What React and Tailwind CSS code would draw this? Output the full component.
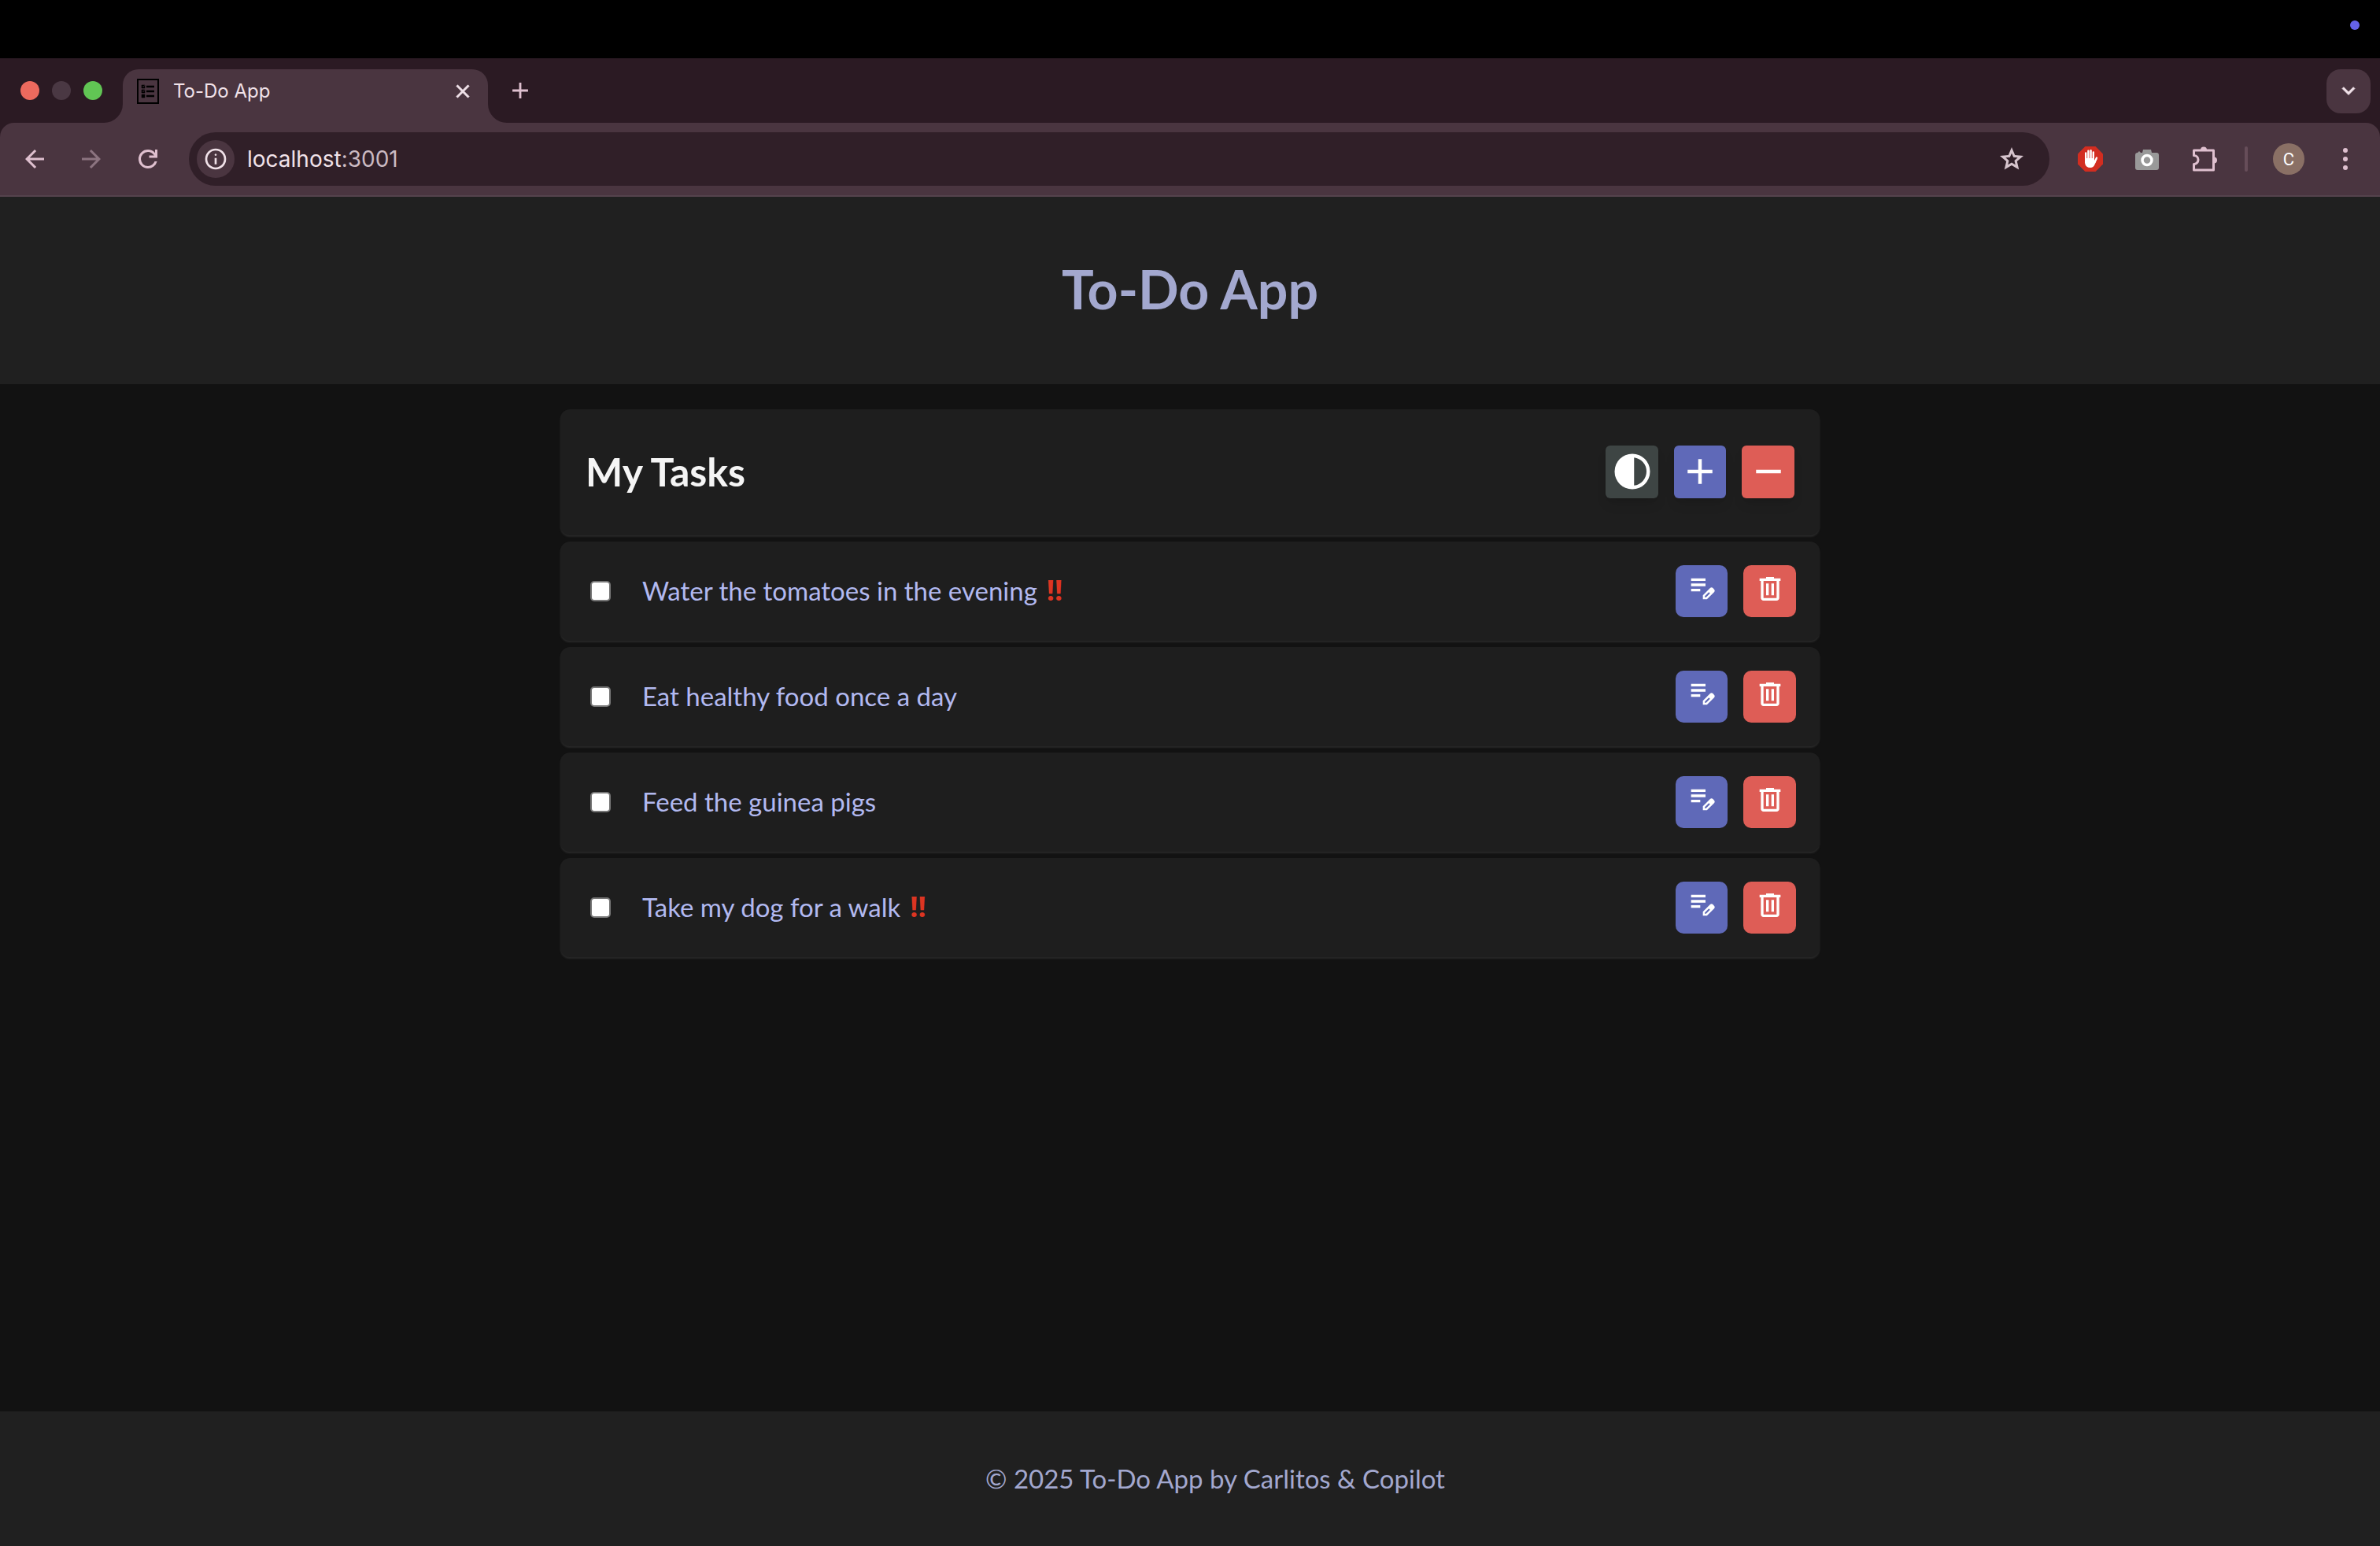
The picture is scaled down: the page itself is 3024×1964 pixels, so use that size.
const icons = {
  add: "M440-440H200v-80h240v-240h80v240h240v80H520v240h-80v-240Z",
  remove: "M200-440v-80h560v80H200Z",
  contrast:
    "M480-80q-83 0-156-31.500T197-197q-54-54-85.500-127T80-480q0-83 31.500-156T197-763q54-54 127-85.500T480-880q83 0 156 31.500T763-763q54 54 85.500 127T880-480q0 83-31.500 156T763-197q-54 54-127 85.500T480-80Zm40-83q119-15 199.500-104.500T800-480q0-123-80.500-212.500T520-797v634Z",
  edit: "M160-400v-80h280v80H160Zm0-160v-80h440v80H160Zm0-160v-80h440v80H160Zm360 560v-123l221-220q9-9 20-13t22-4q12 0 23 4.500t20 13.500l37 37q8 9 12.500 20t4.500 22q0 11-4 22.500T863-380L643-160H520Zm300-263-37-37 37 37ZM580-220h38l121-122-18-19-19-18-122 121v38Zm141-141-19-18 37 37-18-19Z",
  trash:
    "M280-120q-33 0-56.500-23.500T200-200v-520h-40v-80h200v-40h240v40h200v80h-40v520q0 33-23.500 56.500T680-120H280Zm400-600H280v520h400v-520ZM360-280h80v-360h-80v360Zm160 0h80v-360h-80v360Z",
  back: "m313-440 224 224-57 56-320-320 320-320 57 56-224 224h487v80H313Z",
  forward: "M647-440H160v-80h487L423-744l57-56 320 320-320 320-57-56 224-224Z",
  reload:
    "M480-160q-134 0-227-93t-93-227q0-134 93-227t227-93q69 0 132 28.500T720-690v-110h80v280H520v-80h168q-32-56-87.500-88T480-720q-100 0-170 70t-70 170q0 100 70 170t170 70q77 0 139-44t87-116h84q-28 106-114 173t-196 67Z",
  star: "m354-287 126-76 126 77-33-144 111-96-146-13-58-136-58 135-146 13 111 97-33 143ZM233-120l65-281L80-590l288-25 112-265 112 265 288 25-218 189 65 281-247-149-247 149Z",
  info: "M440-280h80v-240h-80v240Zm40-320q17 0 28.500-11.500T520-640q0-17-11.500-28.500T480-680q-17 0-28.500 11.500T440-640q0 17 11.500 28.500T480-600Zm0 520q-83 0-156-31.500T197-197q-54-54-85.500-127T80-480q0-83 31.500-156T197-763q54-54 127-85.500T480-880q83 0 156 31.500T763-763q54 54 85.500 127T880-480q0 83-31.500 156T763-197q-54 54-127 85.500T480-80Zm0-80q134 0 227-93t93-227q0-134-93-227t-227-93q-134 0-227 93t-93 227q0 134 93 227t227 93Z",
  chevron: "M480-344 240-584l56-56 184 184 184-184 56 56-240 240Z",
  close: "m256-200-56-56 224-224-224-224 56-56 224 224 224-224 56 56-224 224 224 224-56 56-224-224-224 224Z",
};

function Icon({ name, className }) {
  return (
    <svg viewBox="0 -960 960 960" fill="currentColor" aria-hidden="true" className={className}>
      <path d={icons[name]} />
    </svg>
  );
}

function TabFlare({ className }) {
  return (
    <svg viewBox="0 0 24 24" aria-hidden="true" className={className}>
      <path d="M24 0V24H0A24 24 0 0 0 24 0Z" fill="#4a3540" />
    </svg>
  );
}

function Favicon() {
  return (
    <svg viewBox="0 0 28 32" aria-hidden="true" className="h-8 w-7" fill="none" stroke="#000">
      <rect x="1" y="1" width="26" height="30" strokeWidth="2" />
      <path d="M12 10h10M12 16h10M12 22h10" strokeWidth="2.500" />
      <path d="M6 8h4v4H6zM6 14h4v4H6zM6 20h4v4H6z" fill="#000" strokeWidth="0.500" />
      <path d="M7 9.500l1 1 1.500-2M7 15.500l1 1 1.500-2" stroke="#4a3540" strokeWidth="0.800" />
    </svg>
  );
}

function TabStrip() {
  return (
    <div className="flex h-[82px] items-end bg-[#2b1a23]">
      <div className="flex gap-4 self-center pl-[26px]">
        <button aria-label="Close window" className="size-6 rounded-full bg-[#ed6a5e]" />
        <button aria-label="Minimize window" className="size-6 rounded-full bg-[#4a3843]" />
        <button aria-label="Zoom window" className="size-6 rounded-full bg-[#61c554]" />
      </div>
      <TabFlare className="ml-0.5 size-6" />
      <div className="flex h-[68px] w-[464px] items-center rounded-t-[20px] bg-[#4a3540] pb-3 pl-[18px] pr-[18px]">
        <Favicon />
        <span className="ml-[18px] flex-1 text-2xl text-[#f1e2e9]">To-Do App</span>
        <button aria-label="Close tab" className="text-[#f1e2e9]">
          <Icon name="close" className="size-7 stroke-current stroke-[24px]" />
        </button>
      </div>
      <TabFlare className="size-6 -scale-x-100" />
      <button aria-label="New tab" className="mb-6 text-[#dfc0cf]">
        <Icon name="add" className="size-[34px]" />
      </button>
      <button
        aria-label="Search tabs"
        className="mb-3 ml-auto mr-3 grid size-14 place-items-center rounded-[18px] bg-[#4a3540] text-[#f1e2e9]"
      >
        <Icon name="chevron" className="size-8 stroke-current stroke-[24px]" />
      </button>
    </div>
  );
}

function Toolbar() {
  return (
    <div className="bg-[#2b1a23]">
      <div className="flex h-[94px] items-center rounded-t-[18px] border-b-2 border-[#55434d] bg-[#4a3540] text-[#dfc0cf]">
        <div className="flex gap-9 pl-[26px]">
          <button aria-label="Back">
            <Icon name="back" className="size-9" />
          </button>
          <button aria-label="Forward" className="text-[#8c7480]">
            <Icon name="forward" className="size-9" />
          </button>
          <button aria-label="Reload">
            <Icon name="reload" className="size-9" />
          </button>
        </div>
        <div className="ml-[34px] flex h-[68px] flex-1 items-center rounded-full bg-[#301f28] pl-2.5 pr-[30px]">
          <button
            aria-label="Site information"
            className="grid size-12 place-items-center rounded-full bg-[#4a3540] text-[#f1e2e9]"
          >
            <Icon name="info" className="size-8" />
          </button>
          <a href="#address" className="ml-4 flex-1 text-[28px] text-[#f1e2e9]">
            localhost<span className="text-[#cbbac2]">:3001</span>
          </a>
          <button aria-label="Bookmark this tab" className="text-[#d6c4cd]">
            <Icon name="star" className="size-9" />
          </button>
        </div>
        <div className="flex items-center pl-9">
          <button aria-label="Ad blocker">
            <svg viewBox="0 0 32 32" className="size-8" aria-hidden="true">
              <path d="M9.400 0h13.200L32 9.400v13.200L22.600 32H9.400L0 22.600V9.400z" fill="#d22d20" />
              <g stroke="#fff" strokeWidth="2.400" strokeLinecap="round" fill="none">
                <path d="M10.200 8.500v10M13.400 5.800v12M16.600 5.200v12M19.800 7.500v10M24 14.500L21 21" />
              </g>
              <path d="M9 15h12v3.500l2-3 1.500.500-3 7q-1.500 4-5.500 4-6 0-7-6z" fill="#fff" />
            </svg>
          </button>
          <button aria-label="Screenshot" className="ml-10">
            <svg viewBox="0 0 32 32" className="size-8" aria-hidden="true">
              <path d="M4 8l2-2 2 2h2l1-4h10l1 4h6q3 0 3 3v16q0 3-3 3H4q-3 0-3-3V11q0-3 3-3z" fill="#999" />
              <circle cx="16" cy="17.500" r="6" fill="#999" stroke="#fff" strokeWidth="3.500" />
            </svg>
          </button>
          <button aria-label="Extensions" className="ml-10">
            <svg viewBox="0 0 34 34" className="size-[34px]" aria-hidden="true">
              <path
                d="M3.500 6H28.500V31H3.500V23.500A5 5 0 0 0 3.500 12.500Z"
                fill="none"
                stroke="#dfc0cf"
                strokeWidth="3"
                strokeLinejoin="round"
              />
              <path d="M12 5.500a4 4 0 0 1 8 0zM29 14.500a4 4 0 0 1 0 8z" fill="#dfc0cf" />
            </svg>
          </button>
          <div className="ml-[34px] h-8 w-1 rounded-full bg-[#664d59]" />
          <button
            aria-label="Profile"
            className="ml-8 grid size-10 place-items-center rounded-full bg-[#8a7065] font-[Roboto] text-[22px] text-white"
          >
            C
          </button>
          <button aria-label="Menu" className="ml-[34px] mr-[26px]">
            <svg viewBox="0 0 36 36" className="size-9" fill="#dfc0cf" aria-hidden="true">
              <circle cx="18" cy="7" r="3" />
              <circle cx="18" cy="18" r="3" />
              <circle cx="18" cy="29" r="3" />
            </svg>
          </button>
        </div>
      </div>
    </div>
  );
}

const tasks = [
  { id: "tomatoes", text: "Water the tomatoes in the evening", urgent: true },
  { id: "food", text: "Eat healthy food once a day", urgent: false },
  { id: "guinea", text: "Feed the guinea pigs", urgent: false },
  { id: "dog", text: "Take my dog for a walk", urgent: true },
];

function Task({ task }) {
  return (
    <li className="flex h-[126px] items-center rounded-xl bg-[#1e1e1e] pl-[38px] pr-[30px] shadow-[0_2px_2px_#282828]">
      <input
        id={task.id}
        type="checkbox"
        className="size-[26px] appearance-none rounded-[5px] border-2 border-[#767676] bg-white"
      />
      <label htmlFor={task.id} className="ml-10 flex-1 text-[33px] text-[#b2b9f0]">
        {task.text}
        {task.urgent && (
          <span className="ml-3 font-['Noto_Sans'] text-4xl/8 font-bold text-[#dc3522]">‼</span>
        )}
      </label>
      <div className="flex gap-5 text-white">
        <button aria-label="Edit task" className="size-[66px] rounded-[10px] bg-[#5f69b8] pb-1.5">
          <Icon name="edit" className="mx-auto size-10" />
        </button>
        <button aria-label="Delete task" className="h-[66px] w-[67px] rounded-[10px] bg-[#de5d56] pb-1.5">
          <Icon name="trash" className="mx-auto size-10" />
        </button>
      </div>
    </li>
  );
}

export default function App() {
  return (
    <div className="flex min-h-screen flex-col bg-[#121212] font-[Inter,sans-serif]">
      <div className="flex h-[74px] justify-end bg-black pr-[26px] pt-[26px]">
        <span className="size-3 rounded-full bg-[#6462ea]" />
      </div>
      <TabStrip />
      <Toolbar />
      <div className="flex flex-1 flex-col font-[Lato,sans-serif]">
        <header className="flex h-[238px] items-center justify-center bg-[#202020] pb-1">
          <h1 className="text-[68px] font-bold text-[#a3a8cf]">To-Do App</h1>
        </header>
        <main className="mx-auto flex w-full max-w-[1600px] flex-1 flex-col gap-2 pt-8">
          <div className="flex h-40 items-center justify-between rounded-xl bg-[#1e1e1e] px-8 pb-0.5 shadow-[0_2px_2px_#282828]">
            <h2 className="text-[50px] font-bold text-[#f5f5f5]">My Tasks</h2>
            <div className="flex gap-5 text-white">
              <button
                aria-label="Toggle theme"
                className="grid size-[67px] place-items-center rounded-md bg-[#3e4544] shadow-lg"
              >
                <Icon name="contrast" className="size-[54px]" />
              </button>
              <button aria-label="Add task" className="grid h-[67px] w-[66px] place-items-center rounded-md bg-[#5f69b8] shadow-lg">
                <Icon name="add" className="size-[54px]" />
              </button>
              <button
                aria-label="Remove tasks"
                className="grid size-[67px] place-items-center rounded-md bg-[#de5d56] shadow-lg"
              >
                <Icon name="remove" className="size-[54px]" />
              </button>
            </div>
          </div>
          <ul className="flex flex-col gap-2">
            {tasks.map((task) => (
              <Task key={task.id} task={task} />
            ))}
          </ul>
        </main>
        <footer className="flex h-[171px] items-center justify-center bg-[#202020] pl-16 text-[33px] text-[#a3a8cf]">
          <p>© 2025 To-Do App by Carlitos &amp; Copilot</p>
        </footer>
      </div>
    </div>
  );
}
